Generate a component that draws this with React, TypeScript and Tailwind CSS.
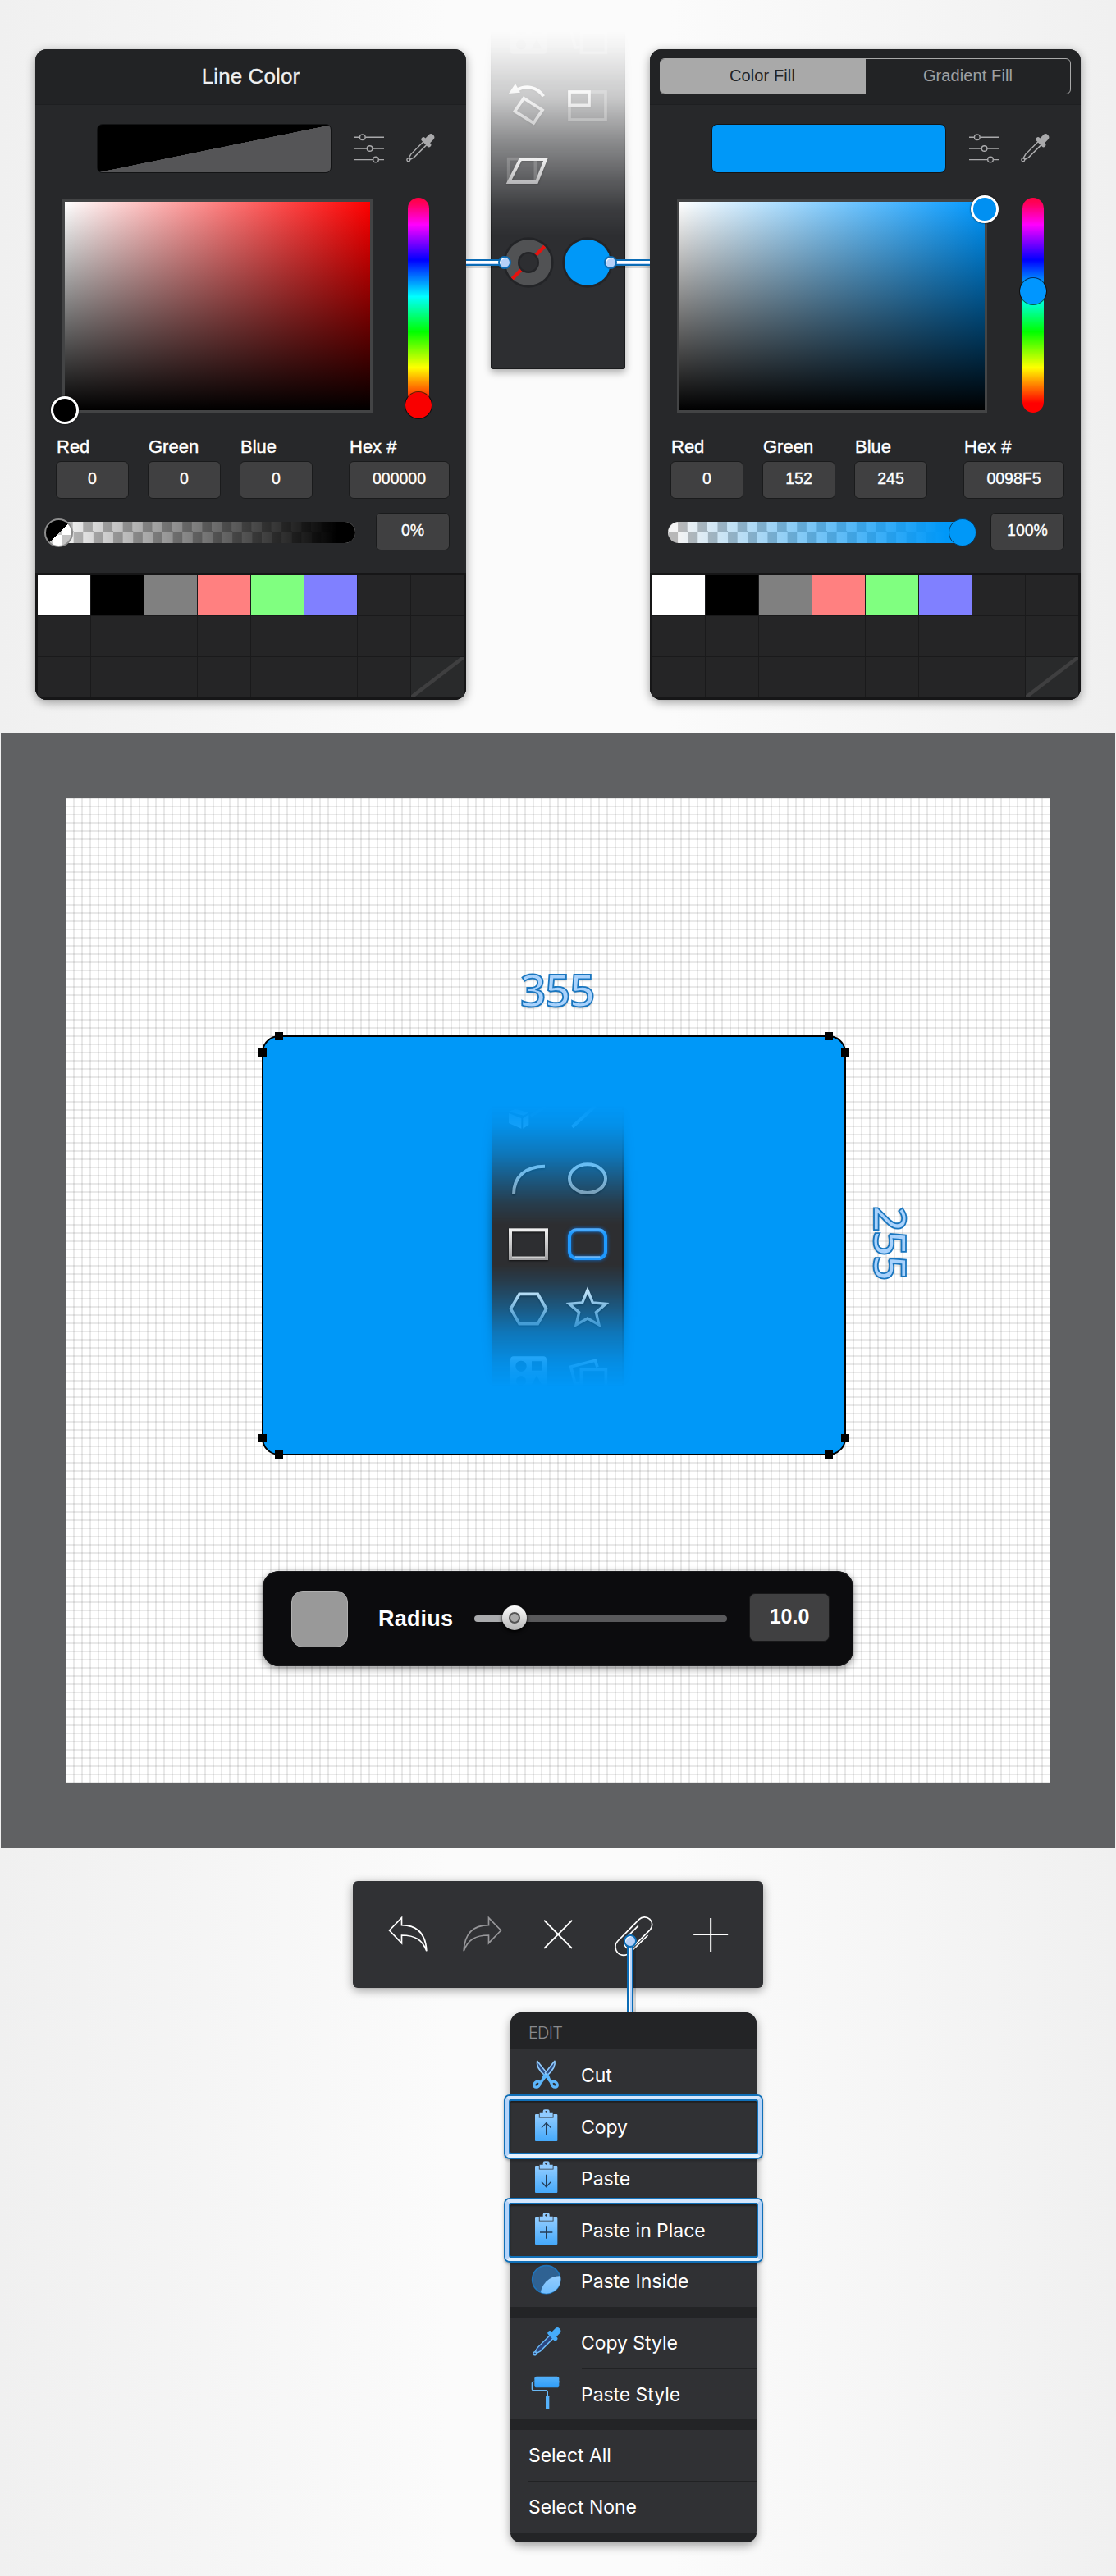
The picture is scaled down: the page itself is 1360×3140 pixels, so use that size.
import React from 'react';

type PanelProps = {
  title?: string;
  solid: boolean;
  rgb: [string, string, string];
  hex: string;
  alpha: string;
};

function AdjustIcon() {
  return (
    <svg width="36" height="36" viewBox="0 0 36 36" fill="none" stroke="#a9a9ab" strokeWidth="1.4">
      <path d="M0 4.2H6.4M13.2 4.2H36M0 18H15.2M22 18H36M0 31.6H22.6M29.4 31.6H36" />
      <circle cx="9.8" cy="4.2" r="3.3" />
      <circle cx="18.6" cy="18" r="3.3" />
      <circle cx="26" cy="31.6" r="3.3" />
    </svg>
  );
}

function Dropper({ color, tube, stroke }: { color: string; tube: string; stroke: string }) {
  return (
    <svg width="36" height="36" viewBox="0 0 36 36">
      <g transform="translate(17.8 17.8) rotate(45)">
        <path d="M-2.7 -9 V13 L-1.4 17.5 H1.4 L2.7 13 V-9" fill={tube} stroke={stroke} strokeWidth="1.5" />
        <circle cx="0" cy="19.8" r="1.9" fill={tube} stroke={stroke} strokeWidth="1.4" />
        <rect x="-4" y="-23" width="8" height="14" rx="4" fill={color} />
        <path d="M-3 -16 L-3.4 -13.4 H3.4 L3 -16Z" fill={color} />
        <rect x="-7.4" y="-13.4" width="14.8" height="5.4" rx="2.7" fill={color} />
      </g>
    </svg>
  );
}

const fieldBox =
  'flex items-center justify-center rounded-[6px] border border-[#1a1b1c] bg-[#404041] text-[19.5px] leading-none text-white [-webkit-text-stroke:0.35px_#fff]';

function Channel({ label, value, wide }: { label: string; value: string; wide?: boolean }) {
  return (
    <div className={wide ? 'w-[123px]' : 'w-[89px]'}>
      <div className="h-[30px] pl-[1px] text-[22px] leading-[25px] text-white whitespace-nowrap [-webkit-text-stroke:0.4px_#fff]">
        {label}
      </div>
      <div className={fieldBox + ' h-[46px] pb-[2px]'}>{value}</div>
    </div>
  );
}

const swatches = ['#ffffff', '#000000', '#808080', '#ff8080', '#80ff80', '#8080ff'];

function ColorPanel({ title, solid, rgb, hex, alpha }: PanelProps) {
  return (
    <div className="flex h-[793px] w-[525px] shrink-0 flex-col overflow-hidden rounded-[14px] bg-[#27282a]">
      <div className="flex h-[68px] shrink-0 items-center justify-center border-b border-[#1e1f21] bg-[#222325]">
        {title ? (
          <span className="mb-[2px] text-[26px] leading-none tracking-[0.1px] text-[#f0f0f0] [-webkit-text-stroke:0.3px_#f0f0f0]">
            {title}
          </span>
        ) : (
          <div className="mb-[1px] flex h-[44px] w-[501px] overflow-hidden rounded-[6px] border-[1.5px] border-[#a9a9a9] text-[20px] tracking-[0.1px]">
            <div className="flex w-[250px] items-center justify-center bg-[#a9a9a9] pb-[3px] pr-[2px] text-[#222325]">Color Fill</div>
            <div className="flex flex-1 items-center justify-center pb-[3px] text-[#a0a0a0]">Gradient Fill</div>
          </div>
        )}
      </div>

      <div className="mt-[23px] flex h-[60px] shrink-0 items-center pl-[75px]">
        <div
          className={
            'h-[60px] w-[286px] rounded-[7px] border-[1.5px] border-[#131415] ' +
            (solid ? 'bg-[#0098f8]' : 'bg-[linear-gradient(to_bottom_right,#000_50%,#555557_50.3%)]')
          }
        />
        <div className="ml-[28px]">
          <AdjustIcon />
        </div>
        <div className="ml-[26px]">
          <Dropper color="#a9a9ab" tube="none" stroke="#a9a9ab" />
        </div>
      </div>

      <div className="mt-[30px] flex h-[262px] shrink-0 items-start pl-[33px]">
        <div className="relative mt-[2px] h-[260px] w-[378px] border-[3px] border-[#434445]">
          <div
            className={
              'h-full w-full ' +
              (solid
                ? 'bg-[linear-gradient(to_top,#000,transparent),linear-gradient(to_right,#fff,#0098ff)]'
                : 'bg-[linear-gradient(to_top,#000,transparent),linear-gradient(to_right,#fff,#f00)]')
            }
          />
          {solid ? (
            <div className="absolute right-[-17px] top-[-8px] size-[34px] rounded-full border-[3px] border-white bg-[#0090f2] shadow-[0_0_2px_#000]" />
          ) : (
            <div className="absolute bottom-[-17px] left-[-17px] size-[34px] rounded-full border-[3px] border-white bg-black shadow-[0_0_2px_#000]" />
          )}
        </div>
        <div className="relative ml-[43px] h-[262px] w-[26px] rounded-full bg-[linear-gradient(to_bottom,#ff0040_0%,#ff0060_3%,#ff00ff_12.6%,#0000ff_29%,#00ffff_46%,#00ff00_62.4%,#ffff00_79%,#ff0000_95.5%,#ff0000_100%)]">
          <div
            className={
              'absolute left-[-4px] size-[34px] rounded-full border-[1.5px] border-[#000000a0] bg-clip-padding ' +
              (solid ? 'top-[97px] bg-[#0096ff]' : 'top-[236px] bg-[#f90000]')
            }
          />
        </div>
      </div>

      <div className="mt-[29px] flex h-[76px] shrink-0 pl-[25px]">
        <Channel label="Red" value={rgb[0]} />
        <div className="w-[23px]" />
        <Channel label="Green" value={rgb[1]} />
        <div className="w-[23px]" />
        <Channel label="Blue" value={rgb[2]} />
        <div className="w-[44px]" />
        <Channel label="Hex #" value={hex} wide />
      </div>

      <div className="mt-[17px] flex h-[46px] shrink-0 items-center pl-[22px]">
        <div className="relative mt-[1px] h-[26px] w-[368px]">
          <div className="h-full w-full overflow-hidden rounded-full bg-[repeating-conic-gradient(#f4f4f4_0_25%,#b8b8b8_0_50%)] bg-[length:24.2px_26px] bg-[position:12.1px_0]">
            <div
              className={
                'h-full w-full ' +
                (solid
                  ? 'bg-[linear-gradient(to_right,#0098f800_3%,#0098f8_92%)]'
                  : 'bg-[linear-gradient(to_right,#00000000_3%,#000_94%)]')
              }
            />
          </div>
          {solid ? (
            <div className="absolute right-[-8px] top-[-4px] size-[34px] rounded-full border-[1.5px] border-[#05375c] bg-[#0098f8]" />
          ) : (
            <div className="absolute left-[-11px] top-[-4px] size-[35px] rounded-full border-2 border-[#8c8c8c] bg-[linear-gradient(135deg,#000_50%,transparent_50%),repeating-conic-gradient(#fff_0_25%,#c4c4c4_0_50%)] bg-[length:31px_31px,24px_26px] bg-[position:0_0,8px_5px]" />
          )}
        </div>
        <div className={fieldBox + ' ml-[25px] h-[46px] w-[90px] pb-[2px]'}>{alpha}</div>
      </div>

      <div className="mt-[28px] grid h-[154px] shrink-0 grid-cols-8 grid-rows-3 gap-px border-x-[3px] border-b-[3px] border-t-2 border-[#161617] bg-[#1a1a1b]">
        {Array.from({ length: 24 }, (_, i) => (
          <div key={i} className="bg-[#252526]" style={swatches[i] ? { background: swatches[i] } : undefined}>
            {i === 23 && (
              <svg width="100%" height="100%" viewBox="0 0 65 49" preserveAspectRatio="none">
                <rect width="65" height="49" fill="#292a2b" />
                <path d="M0 49 L65 0" stroke="#3f3f40" strokeWidth="4.5" />
              </svg>
            )}
          </div>
        ))}
      </div>
    </div>
  );
}

function ToolCell({ children }: { children?: React.ReactNode }) {
  return (
    <svg width="72" height="80" viewBox="0 0 216 240" fill="none" strokeLinejoin="miter">
      <defs>
        <linearGradient id="metal" gradientUnits="userSpaceOnUse" x1="0" y1="60" x2="0" y2="180">
          <stop offset="0" stopColor="#f4f4f4" />
          <stop offset="1" stopColor="#9c9c9e" />
        </linearGradient>
        <linearGradient id="glow" gradientUnits="userSpaceOnUse" x1="0" y1="60" x2="0" y2="180">
          <stop offset="0" stopColor="#5cb2ff" />
          <stop offset="0.15" stopColor="#1f9bff" />
          <stop offset="1" stopColor="#1f97fc" />
        </linearGradient>
      </defs>
      {children}
    </svg>
  );
}

const drop = 'drop-shadow-[0_1px_1px_#000000a0]';

function GridTool() {
  return (
    <ToolCell>
      <path
        fillRule="evenodd"
        fill="url(#metal)"
        d="M54 49H162a12 12 0 0 1 12 12V161a12 12 0 0 1-12 12H54a12 12 0 0 1-12-12V61a12 12 0 0 1 12-12ZM81 65a20 20 0 1 0 0.1 0ZM120 67V101H156V67ZM81 121a18 18 0 1 0 0.1 0ZM138 119L119 154H157Z"
      />
    </ToolCell>
  );
}

function PhotosTool() {
  return (
    <ToolCell>
      <path d="M80 148L63 150L47 87L136 64L144 88" stroke="url(#metal)" strokeWidth="11" />
      <rect x="85" y="97" width="90" height="72" stroke="url(#metal)" strokeWidth="11" />
    </ToolCell>
  );
}

function Link({ className }: { className: string }) {
  return (
    <div
      className={
        'absolute h-[8px] border-y-2 border-[#0c6cb5] bg-[linear-gradient(to_bottom,#fff_45%,#b9d6fb_55%)] shadow-[0_3px_0_#00000026] ' +
        className
      }
    />
  );
}

function Knob({ className }: { className: string }) {
  return <div className={'absolute size-[16px] rounded-full border-2 border-[#0c6cb5] bg-[#b5d0f8] shadow-[inset_1px_1px_0_#fff] ' + className} />;
}

function TransformStrip() {
  return (
    <div className="relative ml-[10px] mr-[10px] h-[470px] w-[204px] shrink-0">
      <div className="h-full px-[20px] [mask-image:linear-gradient(to_bottom,transparent_38px,#0000000a_56px,#00000040_120px,#00000088_170px,#000000c6_220px,#000000ee_255px,#000_288px)]">
        <div className="h-[450px] rounded-b-[3px] border-x-2 border-b-2 border-[#1b1c1e] bg-[#2d2e31] px-[8px] pt-[8px] shadow-[0_4px_10px_#00000050]">
          <div className="grid grid-cols-2">
            <div className="opacity-50">
              <GridTool />
            </div>
            <div className="opacity-50">
              <PhotosTool />
            </div>
            <div className={drop}>
              <ToolCell>
                <path d="M91 95L159 139L127 186L58 143Z" stroke="url(#metal)" strokeWidth="11" />
                <path d="M64 66C100 46 140 54 163 88" stroke="url(#metal)" strokeWidth="12" />
                <path d="M36 78L60 42L78 74Z" fill="url(#metal)" />
              </ToolCell>
            </div>
            <div className={drop}>
              <ToolCell>
                <rect x="42" y="72" width="132" height="102" stroke="#fff" strokeOpacity="0.3" strokeWidth="11" />
                <rect x="42" y="72" width="72" height="49" stroke="url(#metal)" strokeWidth="11" />
              </ToolCell>
            </div>
            <div className={drop}>
              <ToolCell>
                <rect x="35" y="77" width="98" height="86" stroke="#fff" strokeOpacity="0.2" strokeWidth="11" />
                <path d="M36 162L79 78H171L138 162Z" stroke="url(#metal)" strokeWidth="12" />
              </ToolCell>
            </div>
          </div>
          <div className="mt-[32px] grid grid-cols-2">
            <ToolCell>
              <circle cx="108" cy="120" r="92" fill="#232427" />
              <circle cx="108" cy="120" r="84" fill="#515254" />
              <path d="M49 179L167 61" stroke="#e8120e" strokeWidth="13" />
              <circle cx="108" cy="120" r="39" fill="#242528" />
              <circle cx="108" cy="120" r="32" fill="#2d2e31" />
            </ToolCell>
            <ToolCell>
              <circle cx="108" cy="120" r="92" fill="#232427" />
              <circle cx="108" cy="120" r="84" fill="#0098f8" />
            </ToolCell>
          </div>
        </div>
      </div>
      <Link className="left-[-10px] top-[316px] w-[42px]" />
      <Knob className="left-[29px] top-[312px]" />
      <Link className="right-[-10px] top-[316px] w-[42px]" />
      <Knob className="right-[30px] top-[312px]" />
    </div>
  );
}

function ShapeStrip() {
  return (
    <div className="ml-[10px] mt-[53px] h-[400px] w-[200px] px-[20px] [mask-image:linear-gradient(to_bottom,transparent_30px,#00000012_55px,#00000050_90px,#00000098_120px,#000000dc_150px,#000_175px,#000_225px,#000000dc_245px,#00000098_277px,#00000050_308px,#00000018_345px,transparent_374px)]">
      <div className="grid h-full w-[160px] grid-cols-2 content-start bg-[#2d2e31] px-[8px] shadow-[0_0_12px_#00000080,inset_-2px_0_0_#1b1c1e]">
        <ToolCell>
          <path d="M36 114L60 104L109 118L90 128ZM36 120L82 138V176L36 156ZM88 138L109 124V162L88 176Z" fill="#fff" />
          <path d="M116 130L170 96" stroke="#fff" strokeOpacity="0.3" strokeWidth="10" />
        </ToolCell>
        <ToolCell>
          <path d="M52 170L137 92" stroke="#fff" strokeWidth="12" />
        </ToolCell>
        <div className={drop}>
          <ToolCell>
            <path d="M54 177C54 112 96 74 168 74" stroke="url(#metal)" strokeWidth="12" />
          </ToolCell>
        </div>
        <div className={drop}>
          <ToolCell>
            <ellipse cx="108" cy="119" rx="66" ry="52" stroke="url(#metal)" strokeWidth="12" />
          </ToolCell>
        </div>
        <div className={drop}>
          <ToolCell>
            <rect x="42" y="67" width="132" height="104" stroke="url(#metal)" strokeWidth="12" />
            <path d="M48 166H168" stroke="#cfcfd0" strokeWidth="5" />
          </ToolCell>
        </div>
        <div className="drop-shadow-[0_0_2px_#0a6fd8]">
          <ToolCell>
            <rect x="42" y="67" width="132" height="104" rx="26" stroke="url(#glow)" strokeWidth="12" />
            <path d="M62 165H154" stroke="#8ecbff" strokeWidth="4" />
          </ToolCell>
        </div>
        <div className={drop}>
          <ToolCell>
            <path d="M43 115L75 61H142L173 115L142 170H75Z" stroke="url(#metal)" strokeWidth="11" />
          </ToolCell>
        </div>
        <div className={drop}>
          <ToolCell>
            <path d="M108 47L127 93L175 97L139 128L150 174L108 150L66 174L77 128L41 97L89 93Z" stroke="url(#metal)" strokeWidth="10" />
          </ToolCell>
        </div>
        <GridTool />
        <PhotosTool />
      </div>
    </div>
  );
}

const dimension =
  '[font-family:"Open_Sans",sans-serif] text-[55px] font-semibold leading-none tracking-[-1.5px] text-[#a9d2fc] [-webkit-text-stroke:1.8px_#1a76bf] [text-shadow:0_2px_2px_#00000030]';

function Node({ className }: { className: string }) {
  return <div className={'absolute size-[10px] bg-black ' + className} />;
}

function Artboard() {
  return (
    <div className="mx-px h-[1358px] shrink-0 bg-[#606163] p-[79px]">
      <div className="flex h-[1200px] w-[1200px] flex-col bg-white bg-[linear-gradient(to_right,#00000016_2px,transparent_2px),linear-gradient(to_bottom,#00000016_2px,transparent_2px)] bg-[length:10px_10px] bg-[position:-1px_-1px]">
        <div className={'ml-[554px] mt-[205px] h-[84px] ' + dimension}>355</div>
        <div className="flex">
          <div className="relative ml-[239px] flex h-[512px] w-[712px] shrink-0 justify-center rounded-[21px] border-2 border-black bg-[#0098f8]">
            <ShapeStrip />
            <Node className="left-[14px] top-[-6px]" />
            <Node className="right-[14px] top-[-6px]" />
            <Node className="left-[-6px] top-[14px]" />
            <Node className="right-[-6px] top-[14px]" />
            <Node className="bottom-[14px] left-[-6px]" />
            <Node className="bottom-[14px] right-[-6px]" />
            <Node className="bottom-[-6px] left-[14px]" />
            <Node className="bottom-[-6px] right-[14px]" />
          </div>
          <div className={'ml-[28px] mt-[208px] h-[94px] [writing-mode:vertical-rl] ' + dimension}>255</div>
        </div>

        <div className="ml-[240px] mt-[141px] flex h-[116px] w-[720px] items-center rounded-[20px] bg-[#0c0c0e] shadow-[0_3px_10px_#00000070,inset_0_0_0_1px_#1a1a1c]">
          <div className="ml-[35px] mt-[1px] size-[69px] rounded-[14px] border-[1.5px] border-[#b0b0b0] bg-[#999]" />
          <div className="ml-[37px] w-[117px] text-[27px] font-bold leading-none tracking-[0.2px] text-white">Radius</div>
          <div className="relative h-[8px] w-[308px] rounded-full bg-[linear-gradient(to_right,#aaabad_49px,#59595b_49px)]">
            <div className="absolute left-[34px] top-[-12px] flex size-[30px] items-center justify-center rounded-full bg-[linear-gradient(to_bottom,#fff,#b5b5b5)] shadow-[0_2px_4px_#000]">
              <div className="size-[14px] rounded-full border-2 border-[#555] bg-[#aaa]" />
            </div>
          </div>
          <div className="mb-[4px] ml-[27px] flex h-[59px] w-[98px] items-center justify-center rounded-[7px] border border-[#19191a] bg-[#404041] pb-[1px] text-[25px] font-bold leading-none text-white">
            10.0
          </div>
        </div>
      </div>
    </div>
  );
}

function BarCell({ x, children }: { x: number; children: React.ReactNode }) {
  return (
    <svg width="93" height="130" viewBox={`${x} 69 279 390`} fill="none" stroke="#fff" strokeWidth="5">
      {children}
    </svg>
  );
}

const undoPath = 'M163 249L208 203V230C262 230 296 258 299 325C284 284 258 267 208 267V296Z';

function Clipboard({ glyph }: { glyph: string }) {
  return (
    <>
      <rect x="24" y="48" width="82" height="99" rx="3" fill="url(#sky)" />
      <path
        d="M41 44H53V37Q53 31 60 31H70Q77 31 77 37V44H89V59H41Z"
        fill="#90cbff"
        stroke="#303134"
        strokeWidth="5"
        paintOrder="stroke"
      />
      <circle cx="65" cy="40" r="4" fill="#303134" />
      <path d={glyph} stroke="#243d58" strokeWidth="4" />
    </>
  );
}

function MenuIcon({ kind }: { kind: string }) {
  return (
    <svg width="44" height="63" viewBox="0 0 132 189" fill="none">
      <defs>
        <linearGradient id="sky" x1="0" y1="0" x2="0" y2="1">
          <stop offset="0" stopColor="#93cdff" />
          <stop offset="1" stopColor="#45a9fb" />
        </linearGradient>
        <clipPath id="disc">
          <circle cx="65" cy="84" r="53" />
        </clipPath>
      </defs>
      {kind === 'cut' && (
        <g>
          <path d="M32 43C28 60 40 78 60 96L67 86Z" fill="#2f4f86" stroke="#8fc9fb" strokeWidth="5" strokeLinejoin="round" />
          <path d="M96 43C100 60 88 78 68 96L61 86Z" fill="#2f4f86" stroke="#8fc9fb" strokeWidth="5" strokeLinejoin="round" />
          <path d="M56 88L64 94L72 88L82 112L92 122L80 126L64 104L48 126L36 122L46 112Z" fill="#5db6fb" />
          <ellipse cx="31" cy="128" rx="12" ry="9" transform="rotate(-42 31 128)" stroke="#5db6fb" strokeWidth="10" />
          <ellipse cx="95" cy="128" rx="12" ry="9" transform="rotate(42 95 128)" stroke="#5db6fb" strokeWidth="10" />
        </g>
      )}
      {kind === 'copy' && <Clipboard glyph="M65 125V80M48 98L65 80L82 98" />}
      {kind === 'paste' && <Clipboard glyph="M65 80V125M48 107L65 125L82 107" />}
      {kind === 'place' && <Clipboard glyph="M65 79V125M42 102H88" />}
      {kind === 'inside' && (
        <g>
          <circle cx="65" cy="86" r="51" fill="#2f6293" stroke="#1f74bb" strokeWidth="5" />
          <circle cx="114" cy="143" r="70" fill="url(#sky)" clipPath="url(#disc)" />
        </g>
      )}
      {kind === 'roller' && (
        <g>
          <rect x="22" y="29" width="90" height="41" rx="8" fill="url(#roll)" />
          <path d="M22 49H17Q13 49 13 54V74Q13 80 19 80H64Q70 80 70 86V100" stroke="#6bb9f5" strokeWidth="4" />
          <path d="M112 49H116" stroke="#6bb9f5" strokeWidth="5" />
          <rect x="63" y="98" width="13" height="52" rx="5" fill="#55b2fb" />
          <defs>
            <linearGradient id="roll" x1="0" y1="0" x2="0" y2="1">
              <stop offset="0" stopColor="#55b2fb" />
              <stop offset="1" stopColor="#2f9df8" />
            </linearGradient>
          </defs>
        </g>
      )}
    </svg>
  );
}

function MenuItem({ label, kind, height, marked }: { label: string; kind?: string; height: string; marked?: boolean }) {
  return (
    <div className={'relative flex items-center pl-[22px] text-[23px] leading-none tracking-[-0.05px] text-white ' + height}>
      {kind && (
        <div className="mr-[20px] flex w-[44px] items-center justify-center">
          {kind === 'dropper' ? (
            <div className="mb-[2px]">
              <Dropper color="#46acfa" tube="#2c4680" stroke="#6ab8f6" />
            </div>
          ) : (
            <MenuIcon kind={kind} />
          )}
        </div>
      )}
      <span className="mt-px">{label}</span>
      {marked && (
        <div className="absolute inset-x-[-8px] inset-y-[-8px] z-10 rounded-[7px] border-2 border-[#1170b8] shadow-[0_2px_3px_#00000040]">
          <div className="h-full rounded-[5px] border-4 border-[#b5d4fa] border-b-[#e6f2ff] border-t-[#d5e7fd]">
            <div className="h-full rounded-[3px] border-2 border-[#1170b8] shadow-[inset_0_2px_2px_#00000060]" />
          </div>
        </div>
      )}
    </div>
  );
}

function EditMenu() {
  return (
    <div className="ml-[622px] mt-[30px] h-[646px] w-[300px] rounded-[14px] bg-[#303134] shadow-[0_4px_12px_#00000060] [font-family:Inter,sans-serif]">
      <div className="flex h-[45px] items-center rounded-t-[14px] bg-[#232426] pl-[22px] pt-[5px] text-[20px] font-light tracking-[-0.8px] text-[#8a8a8d]">
        EDIT
      </div>
      <MenuItem label="Cut" kind="cut" height="h-[63px]" />
      <MenuItem label="Copy" kind="copy" height="h-[63px]" marked />
      <MenuItem label="Paste" kind="paste" height="h-[63px]" />
      <MenuItem label="Paste in Place" kind="place" height="h-[63px]" marked />
      <MenuItem label="Paste Inside" kind="inside" height="h-[62px]" />
      <div className="h-[13px] bg-[#232426]" />
      <MenuItem label="Copy Style" kind="dropper" height="h-[62px]" />
      <div className="ml-[87px] h-px bg-[#212224]" />
      <MenuItem label="Paste Style" kind="roller" height="h-[61px]" />
      <div className="h-[13px] bg-[#232426]" />
      <MenuItem label="Select All" height="h-[62px]" />
      <div className="ml-[22px] h-px bg-[#212224]" />
      <MenuItem label="Select None" height="h-[62px]" />
      <div className="h-[12px] rounded-b-[14px] bg-[#232426]" />
    </div>
  );
}

export default function App() {
  return (
    <div className='flex h-[3140px] w-[1360px] flex-col overflow-hidden bg-[linear-gradient(to_right,#f0f0f0,#fbfbfb_40%,#fbfbfb_60%,#f0f0f0)] [font-family:"Liberation_Sans",Arial,sans-serif]'>
      <div className="flex h-[894px] shrink-0 items-start">
        <div className="ml-[43px] mt-[60px] rounded-[14px] shadow-[0_3px_12px_#00000060]">
          <ColorPanel title="Line Color" solid={false} rgb={['0', '0', '0']} hex="000000" alpha="0%" />
        </div>
        <TransformStrip />
        <div className="mt-[60px] rounded-[14px] shadow-[0_3px_12px_#00000060]">
          <ColorPanel solid rgb={['0', '152', '245']} hex="0098F5" alpha="100%" />
        </div>
      </div>

      <Artboard />

      <div className="relative ml-[430px] mt-[41px] flex h-[130px] w-[500px] shrink-0 justify-center rounded-[6px] bg-[#303134] shadow-[0_3px_12px_#00000060]">
        <BarCell x={83.5}>
          <path d={undoPath} />
        </BarCell>
        <BarCell x={362.5}>
          <path d={undoPath} transform="translate(734 0) scale(-1 1)" stroke="#97979a" />
        </BarCell>
        <BarCell x={641.5}>
          <path d="M731 214L829 313M829 214L731 313" strokeWidth="6" strokeLinecap="round" />
        </BarCell>
        <BarCell x={920.5}>
          <path d="M1108 267L1042 331A30 30 0 0 1 998 288L1076 209A27 27 0 0 1 1116 247L1052 311A16 16 0 0 1 1028 288L1028 277L1073 232" />
        </BarCell>
        <BarCell x={1199.5}>
          <path d="M1338 204V327M1275 264H1401" strokeWidth="6" />
        </BarCell>
        <div className="absolute left-[334px] top-[78px] h-[82px] w-[8px] border-x-2 border-[#0c6cb5] bg-[linear-gradient(to_right,#fff_45%,#b9d6fb_55%)] shadow-[3px_0_0_#00000026]" />
        <Knob className="left-[330px] top-[65px]" />
      </div>

      <EditMenu />
    </div>
  );
}
